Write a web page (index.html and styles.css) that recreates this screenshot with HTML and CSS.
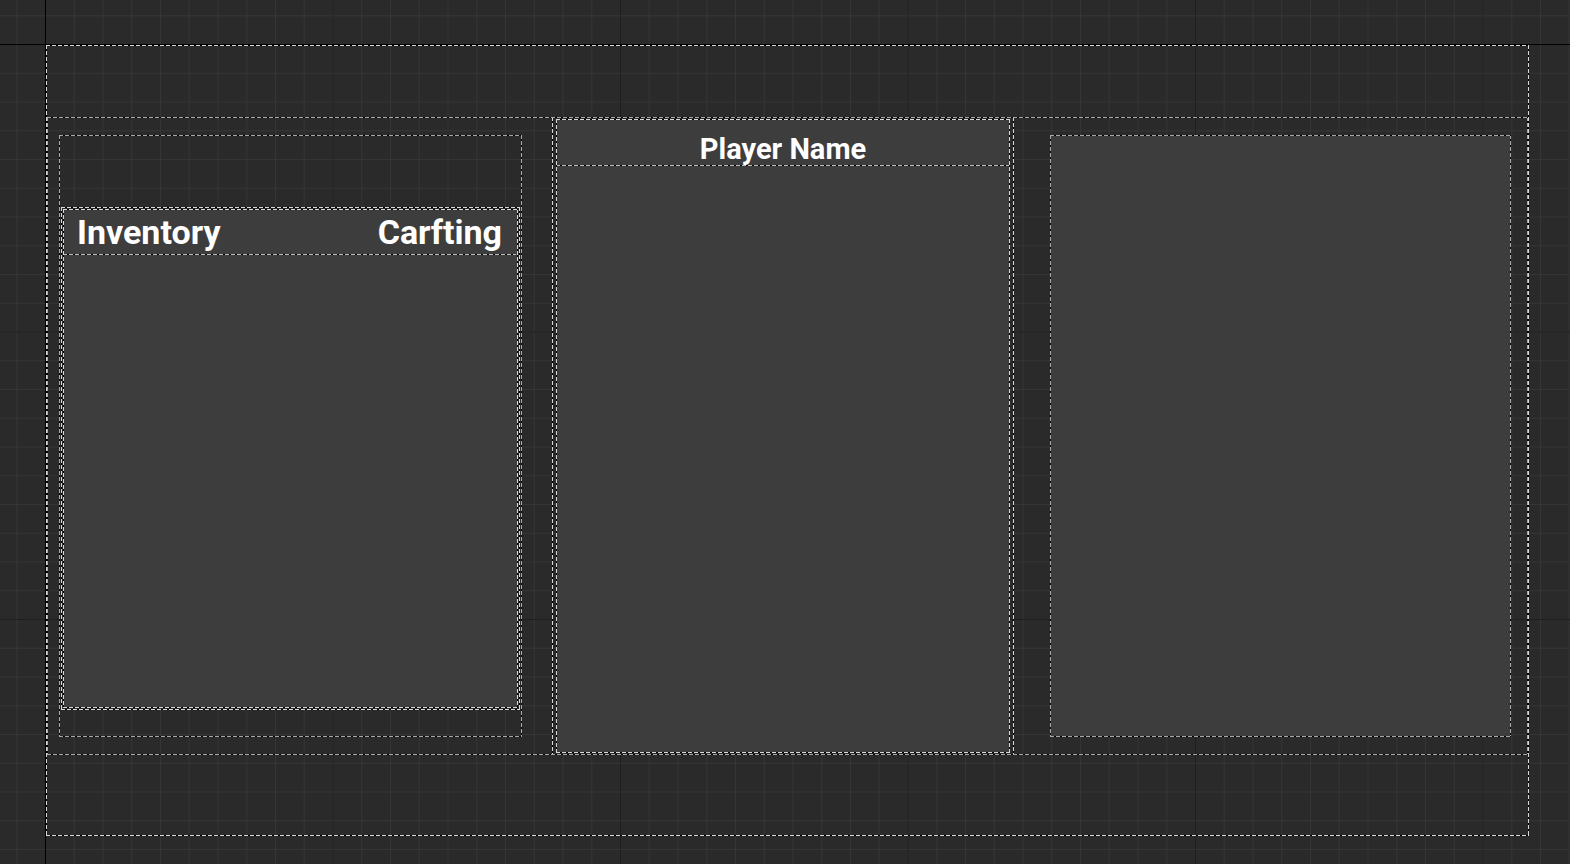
FILE: index.html
```html
<!DOCTYPE html>
<html>
<head>
<meta charset="utf-8">
<link rel="stylesheet" href="styles.css">
</head>
<body>
<div class="canvas">
  <div class="root dash bright">
    <div class="hbox dash dim">
      <div class="slot dash dim">
        <div class="inv-outer dash bright">
          <div class="inv dash bright">
            <div class="inv-head dash-bottom">
              <span class="title">Inventory</span>
              <span class="title">Carfting</span>
            </div>
          </div>
        </div>
      </div>
      <div class="mid-outer dash bright">
        <div class="mid dash bright">
          <div class="mid-head dash-bottom">
            <span class="name">Player Name</span>
          </div>
        </div>
      </div>
      <div class="right dash dim"></div>
    </div>
  </div>
</div>
</body>
</html>
```

FILE: styles.css
```css
html, body {
  margin: 0;
  padding: 0;
}
body {
  width: 1570px;
  height: 864px;
  overflow: hidden;
  font-family: Roboto, "Liberation Sans", sans-serif;
  color: #ffffff;
  background-color: #2a2a2a;
  background-image:
    linear-gradient(90deg, #000 0 1px, transparent 1px),
    linear-gradient(180deg, #000 0 1px, transparent 1px),
    linear-gradient(90deg, #1f1f1f 0 1px, transparent 1px),
    linear-gradient(180deg, #1f1f1f 0 1px, transparent 1px),
    linear-gradient(90deg, #353535 0 1px, transparent 1px),
    linear-gradient(180deg, #353535 0 1px, transparent 1px);
  background-size:
    1570px 864px,
    1570px 864px,
    287.5px 287.5px,
    287.5px 287.5px,
    28.75px 28.75px,
    28.75px 28.75px;
  background-position:
    45px 0,
    0 44px,
    45px 44px,
    45px 44px,
    45px 44px,
    45px 44px;
  background-repeat: no-repeat, no-repeat, repeat, repeat, repeat, repeat;
}

.canvas {
  padding: 45px 0 0 46px;
}

/* dashed two-tone outline used by the designer */
.dash {
  position: relative;
  box-sizing: border-box;
  --dc: #d8d8d8;
}
.dash.dim { --dc: #a8a8a8; }
.dash::after {
  content: "";
  position: absolute;
  inset: 0;
  pointer-events: none;
  background:
    repeating-linear-gradient(90deg, var(--dc) 0 4px, #000 4px 6px) top left / 100% 1px no-repeat,
    repeating-linear-gradient(90deg, var(--dc) 0 4px, #000 4px 6px) bottom left / 100% 1px no-repeat,
    repeating-linear-gradient(180deg, var(--dc) 0 4px, #000 4px 6px) top left / 1px 100% no-repeat,
    repeating-linear-gradient(180deg, var(--dc) 0 4px, #000 4px 6px) top right / 1px 100% no-repeat;
}
.dash-bottom {
  box-sizing: border-box;
  background:
    repeating-linear-gradient(90deg, #bdbdbd 0 4px, #000 4px 6px) bottom left / 100% 1px no-repeat;
}

.root {
  width: 1483px;
  height: 791px;
  padding: 72px 0 0 1px;
}

.hbox {
  width: 1481px;
  height: 638px;
  display: flex;
  align-items: flex-start;
}

.slot {
  width: 463px;
  height: 602px;
  margin: 18px 0 0 12px;
  padding: 72px 0 0 2px;
}

.inv-outer {
  width: 459px;
  height: 503px;
  padding: 2px;
}
.inv {
  width: 455px;
  height: 499px;
  background: #3d3d3d;
}
.inv-head {
  height: 46px;
  margin-right: 2px;
  display: flex;
  justify-content: space-between;
  align-items: center;
  padding: 0 14px 0 14px;
}
.title {
  font-size: 34px;
  font-weight: 700;
  line-height: 1;
  letter-spacing: 0;
  padding-bottom: 1px;
}

.mid-outer {
  width: 462px;
  height: 638px;
  margin-left: 30px;
  padding: 2px 4px;
}
.mid {
  width: 454px;
  height: 634px;
  background: #3d3d3d;
}
.mid-head {
  height: 47px;
  display: flex;
  justify-content: center;
  align-items: center;
}
.name {
  font-size: 29px;
  font-weight: 700;
  line-height: 1;
  padding-top: 14px;
  margin-left: 0;
}

.right {
  width: 461px;
  height: 602px;
  margin: 18px 0 0 36px;
  background: #3d3d3d;
}
```
